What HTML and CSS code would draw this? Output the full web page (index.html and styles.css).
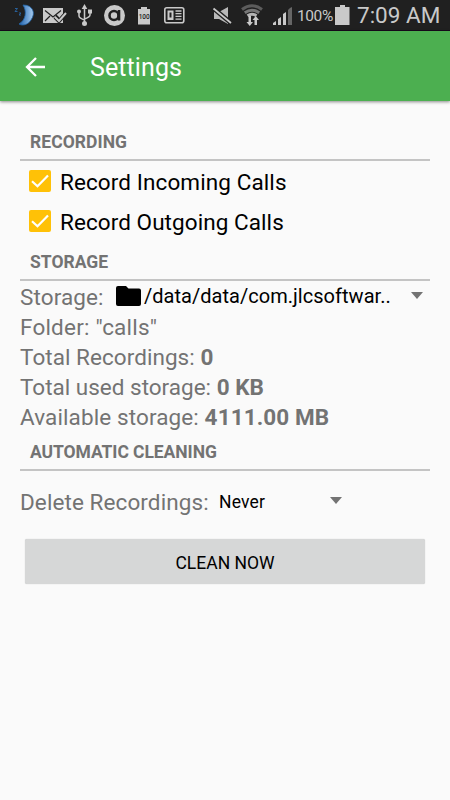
FILE: index.html
```html
<!DOCTYPE html>
<html lang="en">
<head>
<meta charset="utf-8">
<title>Settings</title>
<link rel="stylesheet" href="styles.css">
</head>
<body>
<div class="screen">
  <div class="status">
    <svg class="status-icons" width="290" height="31" viewBox="0 0 290 31">
      <defs>
        <linearGradient id="moon" x1="0" x2="1"><stop offset="0" stop-color="#1c61ad"/><stop offset="1" stop-color="#a9cdf0"/></linearGradient>
      </defs>
      <path d="M23 5C33 5 36 13 31 20C28 25 22 26 19 24C26 20 27 11 23 5Z" fill="url(#moon)" stroke="#2467aa" stroke-width=".8"/>
      <path d="M15 8.500h2.500l-2.500 3h2.500M19 13h2l-2 2h2" fill="none" stroke="#285f98" stroke-width="1"/>
      <path d="M43 8h20v15H43z" fill="#c9c9c9"/>
      <path d="M45 10.500l8 6.500 8-6.500M45 21l5-5M56 15l3 3" fill="none" stroke="#202020" stroke-width="1.200"/>
      <path d="M55 17l4 4 7-8" fill="none" stroke="#202020" stroke-width="4"/>
      <path d="M55 17l4 4 7-8" fill="none" stroke="#c9c9c9" stroke-width="2"/>
      <g fill="none" stroke="#c9c9c9" stroke-width="1.500"><path d="M84.500 8v15M79 12v4q0 2 5.500 4M90 12v3q0 2-5.500 4"/></g>
      <path d="M84.500 4l2.800 5h-5.600zM88 9.500h4v4h-4z" fill="#c9c9c9"/><circle cx="79" cy="11.500" r="2" fill="#c9c9c9"/><circle cx="84.500" cy="23.500" r="2.500" fill="#c9c9c9"/>
      <circle cx="114.500" cy="15.500" r="10.500" fill="#c9c9c9"/>
      <circle cx="114" cy="15.500" r="4.500" fill="none" stroke="#202020" stroke-width="2.600"/><path d="M119 10v10.500" stroke="#202020" stroke-width="2.600"/>
      <path d="M141 7h6v2h3v15.500h-12V9h3z" fill="#c9c9c9"/>
      <text x="144.200" y="19" class="tiny">100</text>
      <rect x="164.800" y="7.800" width="19" height="15" rx="2" fill="none" stroke="#c9c9c9" stroke-width="1.600"/>
      <path d="M167.500 10.500h6v9.500h-6z" fill="#c9c9c9"/><path d="M169.500 12.500h2v5h-2z" fill="#202020"/>
      <path d="M175.500 11h6M175.500 13.700h6M175.500 16.400h6M175.500 19.200h6" stroke="#c9c9c9" stroke-width="1.300"/>
      <path d="M214 12h5l9-5v17l-9-5h-5z" fill="#b9b9b9"/>
      <path d="M213 8l18 15" stroke="#202020" stroke-width="4.500"/><path d="M213.500 8.500l17.500 14.500" stroke="#c9c9c9" stroke-width="1.800"/>
      <g fill="none" stroke-width="3"><path d="M242 9.500q10-7.500 20 0" stroke="#5c5c5c"/><path d="M244.800 12.700q7.200-5 14.400 0" stroke="#777"/><path d="M247.500 15.700q4.500-3 9 0" stroke="#b5b5b5"/></g>
      <path d="M248.500 16h2.500v6h2l-3.250 4-3.250-4h2zM254.500 25v-5h-2l3.250-4 3.250 4h-2v5z" fill="#c9c9c9"/>
      <path d="M273 25v-2l3-2v4zM278 25v-6l3-2v8zM283 25V14l3-2v13z" fill="#c9c9c9"/><path d="M288 25V10l2-2v17z" fill="#666"/>
    </svg>
    <svg class="signal" width="3" height="31"><path d="M0 8l2-1v18H0z" fill="#666"/></svg>
    <span class="percent">100%</span>
    <svg class="battery" width="15" height="31"><path d="M5 5h5v2h4.500v18H0V7H5z" fill="#c9c9c9"/></svg>
    <span class="clock">7:09 AM</span>
  </div>
  <header class="toolbar">
    <svg class="back" width="20" height="20" viewBox="0 0 20 20"><path d="M20 10H2M11 1L2 10l9 9" fill="none" stroke="#fff" stroke-width="2.300"/></svg>
    <h1 class="title">Settings</h1>
  </header>
  <main class="content">
    <h2 class="section first">RECORDING</h2>
    <label class="check"><svg class="box" width="22" height="22" viewBox="0 0 22 22"><rect width="22" height="22" rx="2" fill="#ffc107"/><path d="M3 11.300l5.500 5L19 5.500" fill="none" stroke="#fff" stroke-width="2.200"/></svg><span class="check-text incoming">Record Incoming Calls</span></label>
    <label class="check"><svg class="box" width="22" height="22" viewBox="0 0 22 22"><rect width="22" height="22" rx="2" fill="#ffc107"/><path d="M3 11.300l5.500 5L19 5.500" fill="none" stroke="#fff" stroke-width="2.200"/></svg><span class="check-text">Record Outgoing Calls</span></label>
    <h2 class="section">STORAGE</h2>
    <div class="row">
      <span class="storage-label">Storage:</span>
      <svg class="folder" width="26" height="20" viewBox="0 0 26 20"><path d="M2 0h8l2.500 2.500H23q2 0 2 2V18q0 2-2 2H2q-2 0-2-2V2Q0 0 2 0z"/></svg>
      <span class="path">/data/data/com.jlcsoftwar..</span>
      <svg class="caret" width="12" height="7"><path d="M0 0h12L6 7z" fill="#737373"/></svg>
    </div>
    <div class="row"><span class="folder-name">Folder: "calls"</span></div>
    <div class="row"><span class="total">Total Recordings: <b>0</b></span></div>
    <div class="row"><span>Total used storage: <b>0 KB</b></span></div>
    <div class="row"><span class="available">Available storage: <b>4111.00 MB</b></span></div>
    <h2 class="section auto">AUTOMATIC CLEANING</h2>
    <div class="row cleaning">
      <span class="delete-label">Delete Recordings:</span>
      <span class="never">Never</span>
      <svg class="caret" width="12" height="7"><path d="M0 0h12L6 7z" fill="#737373"/></svg>
    </div>
    <button class="clean">CLEAN NOW</button>
  </main>
</div>
</body>
</html>
```

FILE: styles.css
```css
* { box-sizing: border-box; }
body { margin: 0; font-family: Roboto, "Liberation Sans", sans-serif; background: #fafafa; }
.screen { width: 450px; height: 800px; overflow: hidden; background: #fafafa; }
svg { display: block; flex: none; }
span { white-space: nowrap; flex: none; }
.status { height: 31px; display: flex; background: #202020; color: #c9c9c9; border-bottom: 1px solid #17091c; }
.tiny { font-size: 6.500px; font-weight: 500; fill: #202020; text-anchor: middle; }
.percent { margin-left: 4px; width: 35px; font-size: 15.500px; line-height: 32px; letter-spacing: -.4px; }
.battery { margin-left: 3px; }
.clock { margin-left: 7px; font-size: 22.500px; line-height: 31px; }
.toolbar { height: 70px; display: flex; align-items: center; padding: 1px 0 0 25px; background: #4caf50; color: #fff; box-shadow: 0 1px 3px rgba(0,0,0,.45); }
.title { margin: 2px 0 0 45px; font-size: 25px; font-weight: 400; line-height: 30px; letter-spacing: .1px; }
.content { padding: 19px 20px 0; color: #737373; }
.section { height: 40px; margin: 0; padding: 10px 10px 0; border-bottom: 2px solid #c4c4c4; font-size: 17.500px; line-height: 22px; font-weight: 700; }
.first { height: 41px; padding-top: 11px; letter-spacing: .06px; }
.auto { letter-spacing: -.07px; }
.check { display: flex; align-items: center; height: 40px; padding-left: 9px; font-size: 22.500px; line-height: 30px; color: #000; }
.check-text { padding-top: 2px; letter-spacing: .07px; }
.incoming { letter-spacing: .1px; }
.box { margin-right: 9px; }
.row { height: 30px; display: flex; align-items: center; padding-top: 2px; font-size: 22.500px; line-height: 28px; }
.storage-label { width: 96px; letter-spacing: .1px; }
.path { width: 267px; font-size: 20px; line-height: 26px; color: #000; padding-bottom: 2px; letter-spacing: .03px; }
.folder { margin: -2px 2px 0 0; }
.caret { margin-top: -3px; }
.folder-name { letter-spacing: .2px; }
.total { letter-spacing: .05px; }
.available { letter-spacing: .11px; }
.cleaning { margin-top: 16px; padding-top: 0; }
.delete-label { width: 199px; letter-spacing: .09px; }
.never { width: 111px; font-size: 17.500px; letter-spacing: .2px; color: #000; }
.clean { display: block; width: 400px; height: 45px; margin: 22px 0 0 5px; padding: 2px 0 0; border: 0; border-radius: 2px; background: #d6d7d7; box-shadow: 0 0 1px rgba(0,0,0,.25); font-family: inherit; font-size: 17.500px; color: #000; }
```
